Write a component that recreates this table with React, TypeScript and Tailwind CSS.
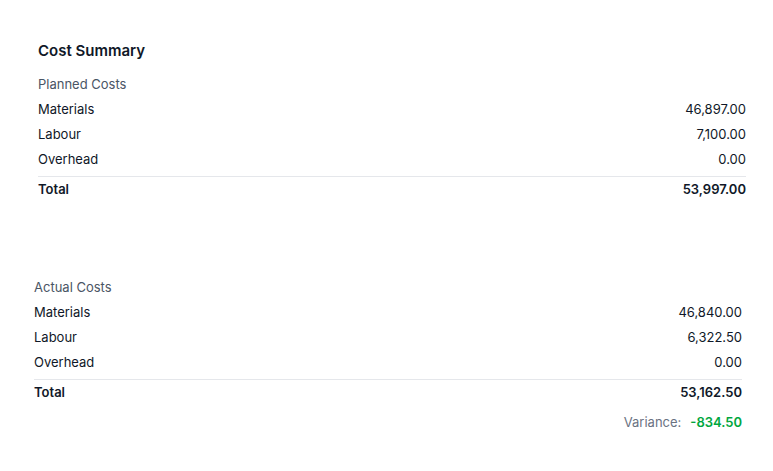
import React from 'react';

type Row = { label: string; value: string };

const planned: Row[] = [
    { label: 'Materials', value: '46,897.00' },
    { label: 'Labour', value: '7,100.00' },
    { label: 'Overhead', value: '0.00' },
];

const actual: Row[] = [
    { label: 'Materials', value: '46,840.00' },
    { label: 'Labour', value: '6,322.50' },
    { label: 'Overhead', value: '0.00' },
];

function CostTable({ title, rows, total }: { title: string; rows: Row[]; total: string }) {
    return (
        <div className="text-[13px] text-gray-900">
            <div className="leading-[25px] text-gray-600">{title}</div>
            {rows.map((r) => (
                <div key={r.label} className="flex justify-between leading-[25px]">
                    <span>{r.label}</span>
                    <span>{r.value}</span>
                </div>
            ))}
            <div className="mt-[4px] flex justify-between border-t border-gray-200 font-semibold leading-[25px]">
                <span>Total</span>
                <span>{total}</span>
            </div>
        </div>
    );
}

export default function App() {
    return (
        <div className="min-h-screen bg-white font-['Inter',sans-serif]">
            <div className="pl-[38px] pr-[27px] pt-[41px]">
                <h2 className="mb-[11px] text-[15px] font-semibold leading-[20px] text-gray-900">Cost Summary</h2>
                <CostTable title="Planned Costs" rows={planned} total="53,997.00" />
            </div>
            <div className="mt-[73px] pl-[34px] pr-[31px]">
                <CostTable title="Actual Costs" rows={actual} total="53,162.50" />
                <div className="mt-[7px] flex justify-end gap-[9px] text-[13px] leading-[20px]">
                    <span className="text-gray-500">Variance:</span>
                    <span className="font-semibold text-green-600">-834.50</span>
                </div>
            </div>
        </div>
    );
}
